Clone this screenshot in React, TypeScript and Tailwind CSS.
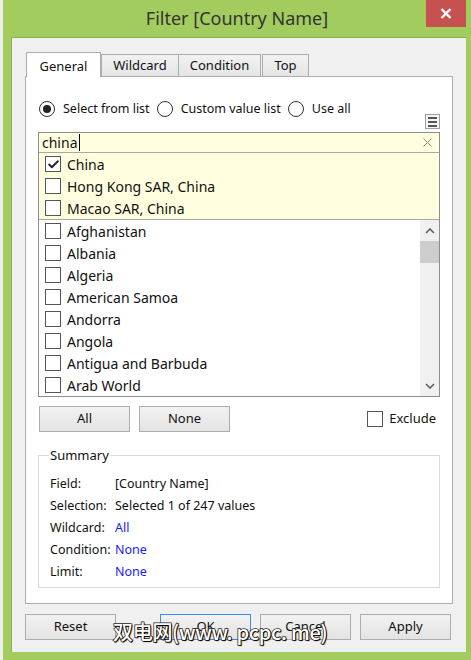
import { Check } from "lucide-react";

const font = { fontFamily: '"Noto Sans", "Open Sans", sans-serif' };

const matches = ["China", "Hong Kong SAR, China", "Macao SAR, China"];
const countries = [
  "Afghanistan",
  "Albania",
  "Algeria",
  "American Samoa",
  "Andorra",
  "Angola",
  "Antigua and Barbuda",
  "Arab World",
];

const summary: { label: string; value: string; link?: boolean }[] = [
  { label: "Field:", value: "[Country Name]" },
  { label: "Selection:", value: "Selected 1 of 247 values" },
  { label: "Wildcard:", value: "All", link: true },
  { label: "Condition:", value: "None", link: true },
  { label: "Limit:", value: "None", link: true },
];

function Box({ checked }: { checked?: boolean }) {
  return (
    <span className="flex h-[16px] w-[16px] shrink-0 items-center justify-center border border-[#555] bg-white">
      {checked && <Check size={13} strokeWidth={3.5} className="text-[#222]" />}
    </span>
  );
}

function Radio({ on, label }: { on?: boolean; label: string }) {
  return (
    <label className="flex items-center gap-[8px]">
      <span className="flex h-[16px] w-[16px] items-center justify-center rounded-full border border-[#333] bg-white">
        {on && <span className="h-[8px] w-[8px] rounded-full bg-[#222]" />}
      </span>
      <span>{label}</span>
    </label>
  );
}

function Row({ name, checked }: { name: string; checked?: boolean }) {
  return (
    <div className="flex h-[22px] items-center gap-[6px] pl-[6px]">
      <Box checked={checked} />
      <span className="text-[14px] text-[#111]">{name}</span>
    </div>
  );
}

function Btn({ children, w, focus }: { children: string; w: string; focus?: boolean }) {
  return (
    <button
      className={`${w} h-[26px] border bg-gradient-to-b from-[#f2f2f2] to-[#e3e3e3] text-[13px] text-[#111] ${
        focus ? "border-[#3c8ff0]" : "border-[#adadad]"
      }`}
    >
      {children}
    </button>
  );
}

export default function App() {
  return (
    <div className="relative flex h-[660px] w-[471px] overflow-hidden bg-[#f4f4f4] text-[12.5px] text-[#111]" style={font}>
      <div className="w-[3px] shrink-0 bg-[#eeeeee]" />
      <div className="flex flex-1 flex-col bg-[#a2cd5e] pb-[8px] pl-[8px] pr-[5px]">
        <div className="relative flex h-[37px] shrink-0 items-center justify-center pr-[3px] text-[18px] text-[#333]">
          Filter [Country Name]
          <div className="absolute right-0 top-0 flex h-[27px] w-[40px] items-center justify-center bg-[#c75050]">
            <svg width="12" height="11" viewBox="0 0 12 11">
              <path d="M1.5 1 L10.5 10 M10.5 1 L1.5 10" stroke="white" strokeWidth="2.4" />
            </svg>
          </div>
        </div>

        <div className="flex flex-1 flex-col border-l border-t border-[#8cb04e] bg-[#f0f0f0] px-[13px] pt-[14px]">
          <div className="flex h-[24px] items-end pl-[1px] text-[13px]">
            <div className="relative z-10 -mb-px flex h-[25px] w-[75px] items-start justify-center border border-b-0 border-[#adadad] bg-white pt-[4px]">
              General
            </div>
            <div className="flex h-[22px] w-[78px] items-center justify-center border border-b-0 border-[#adadad] bg-gradient-to-b from-[#f2f2f2] to-[#e5e5e5]">
              Wildcard
            </div>
            <div className="flex h-[22px] w-[82px] items-center justify-center border border-b-0 border-l-0 border-[#adadad] bg-gradient-to-b from-[#f2f2f2] to-[#e5e5e5]">
              Condition
            </div>
            <div className="ml-[1px] flex h-[22px] w-[47px] items-center justify-center border border-b-0 border-[#adadad] bg-gradient-to-b from-[#f2f2f2] to-[#e5e5e5]">
              Top
            </div>
          </div>

          <div className="flex h-[528px] flex-col border border-[#adadad] bg-white px-[12px]">
            <div className="mt-[24px] flex h-[16px] items-center gap-[7px] pl-[1px]">
              <Radio on label="Select from list" />
              <Radio label="Custom value list" />
              <Radio label="Use all" />
            </div>

            <div className="-mt-[3px] flex justify-end">
              <div className="flex h-[15px] w-[15px] flex-col items-center justify-center gap-[2px] border border-[#a0a0a0] bg-[#f4f4f4]">
                <span className="h-[2px] w-[9px] bg-[#555]" />
                <span className="h-[2px] w-[9px] bg-[#555]" />
                <span className="h-[2px] w-[9px] bg-[#555]" />
              </div>
            </div>

            <div className="mt-[3px] flex flex-col border border-[#8e8e8e]">
              <div className="flex h-[20px] items-center justify-between border-b border-[#a8a8a8] bg-[#ffffdf] pl-[3px] pr-[7px]">
                <span className="flex items-center text-[14px]">
                  china
                  <span className="ml-px h-[17px] w-px bg-black" />
                </span>
                <svg width="9" height="9" viewBox="0 0 9 9">
                  <path d="M0.5 0.5 L8.5 8.5 M8.5 0.5 L0.5 8.5" stroke="#888" strokeWidth="1" />
                </svg>
              </div>
              <div className="border-b border-[#a8a8a8] bg-[#ffffdf]">
                {matches.map((m, i) => (
                  <Row key={m} name={m} checked={i === 0} />
                ))}
              </div>
              <div className="flex h-[176px]">
                <div className="flex-1">
                  {countries.map((c) => (
                    <Row key={c} name={c} />
                  ))}
                </div>
                <div className="flex w-[19px] flex-col bg-[#f0f0f0]">
                  <div className="flex h-[21px] items-center justify-center">
                    <svg width="10" height="6" viewBox="0 0 10 6">
                      <path d="M1 5 L5 1 L9 5" stroke="#606060" strokeWidth="1.6" fill="none" />
                    </svg>
                  </div>
                  <div className="h-[22px] bg-[#cdcdcd]" />
                  <div className="flex-1" />
                  <div className="flex h-[21px] items-center justify-center">
                    <svg width="10" height="6" viewBox="0 0 10 6">
                      <path d="M1 1 L5 5 L9 1" stroke="#606060" strokeWidth="1.6" fill="none" />
                    </svg>
                  </div>
                </div>
              </div>
            </div>

            <div className="mt-[9px] flex items-center pl-px">
              <Btn w="w-[91px]">All</Btn>
              <div className="w-[9px]" />
              <Btn w="w-[91px]">None</Btn>
              <div className="flex-1" />
              <label className="mr-[4px] flex items-center gap-[6px] text-[13px]">
                <Box />
                <span>Exclude</span>
              </label>
            </div>

            <fieldset className="mt-[14px] h-[142px] border border-[#dcdcdc] px-[11px] pb-0">
              <legend className="ml-[-1px] px-[1px] text-[13px]">Summary</legend>
              <div className="mt-[8px] flex flex-col">
                {summary.map((s) => (
                  <div key={s.label} className="flex h-[22px] items-center">
                    <span className="w-[65px]">{s.label}</span>
                    <span className={s.link ? "text-[#1a1aff]" : ""}>{s.value}</span>
                  </div>
                ))}
              </div>
            </fieldset>
          </div>

          <div className="mt-[10px] flex items-center">
            <Btn w="w-[91px]">Reset</Btn>
            <div className="w-[44px]" />
            <Btn w="w-[91px]" focus>
              OK
            </Btn>
            <div className="w-[9px]" />
            <Btn w="w-[91px]">Cancel</Btn>
            <div className="w-[9px]" />
            <Btn w="w-[91px]">Apply</Btn>
          </div>
        </div>
      </div>

      <div
        className="absolute left-[113px] top-[622px] text-[20px] font-medium leading-none tracking-[-0.3px] text-white"
        style={{
          fontFamily: '"Noto Sans CJK SC", "Noto Sans", sans-serif',
          WebkitTextStroke: "1.5px #222",
          paintOrder: "stroke fill",
          textShadow: "1px 1px 1px #000",
        }}
      >
        双电网(www. pcpc. me)
      </div>
    </div>
  );
}
